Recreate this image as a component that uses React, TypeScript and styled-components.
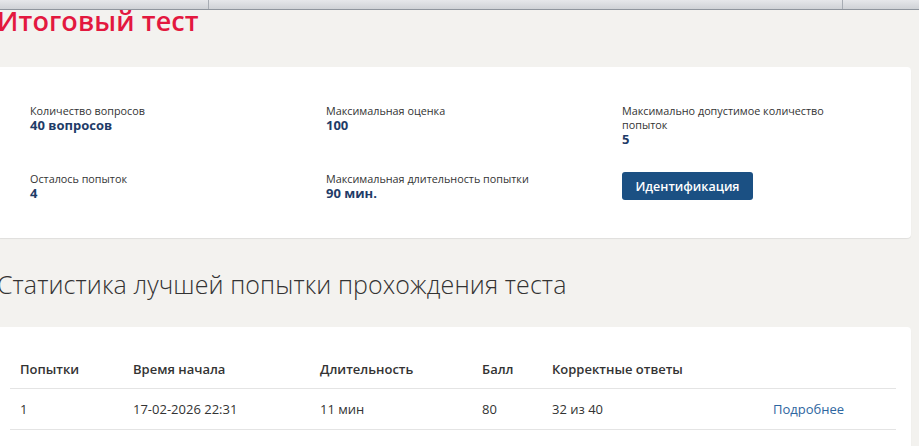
import styled, { createGlobalStyle } from 'styled-components';

const GlobalStyle = createGlobalStyle`
	html, body {
		margin: 0;
		padding: 0;
		background: #f3f2ef;
		overflow: hidden;
	}
	body {
		font-family: "Open Sans", "Noto Sans", sans-serif;
		color: #333;
	}
`;

const TopStrip = styled.div`
	display: flex;
	height: 9px;
	background: linear-gradient(#e6e7ea, #cfd2d6);
	border-bottom: 1px solid #8f959d;
`;

const StripPart = styled.div<{ w?: number }>`
	${props => props.w ? `width: ${props.w}px;` : 'flex: 1;'}
	border-right: 1px solid #a7acb3;
	&:last-child {
		border-right: none;
	}
`;

const Page = styled.div`
	margin-left: -4px;
	width: 915px;
`;

const Title = styled.h1`
	margin: 0 0 35px 4px;
	font-family: "Open Sans", sans-serif;
	font-size: 27px;
	line-height: 22px;
	font-weight: 600;
	color: #e3183f;
	letter-spacing: 0.1px;
	position: relative;
	left: -3px;
`;

const Card = styled.div<{ table?: boolean }>`
	background: #fff;
	border-radius: 4px;
	box-shadow: 0 1px 1px rgba(0, 0, 0, 0.08);
	${props => props.table ? `
		padding: 20px 15px 20px 14px;
	` : `
		padding: 37px 0 38px 34px;
	`}
`;

const InfoGrid = styled.div`
	display: grid;
	grid-template-columns: 296px 296px 215px;
	row-gap: 26px;
`;

const InfoItem = styled.div`
	display: flex;
	flex-direction: column;
	align-items: flex-start;
`;

const Label = styled.div`
	font-size: 10.8px;
	line-height: 14px;
	color: #333;
`;

const Value = styled.div`
	font-size: 13px;
	line-height: 14px;
	font-weight: 700;
	color: #1f3c68;
`;

const Button = styled.button`
	height: 28px;
	width: 131px;
	border: none;
	border-radius: 3px;
	background: #1b5083;
	color: #fff;
	font-family: "Open Sans", sans-serif;
	font-size: 12.5px;
	font-weight: 600;
	cursor: pointer;
`;

const SectionTitle = styled.h2`
	margin: 31px 0 28px 1px;
	font-size: 25px;
	line-height: 30px;
	font-weight: 300;
	letter-spacing: 0.1px;
	color: #333;
`;

const Table = styled.table`
	width: 100%;
	border-collapse: collapse;
	table-layout: fixed;
	font-size: 13px;
	line-height: 18px;
`;

const Th = styled.th`
	text-align: left;
	font-weight: 600;
	color: #333;
	padding: 13px 10px 10px;
	border-bottom: 1px solid #e4e4e4;
`;

const Td = styled.td`
	color: #333;
	padding: 11px 10px 11px;
	border-bottom: 1px solid #e4e4e4;
`;

const Link = styled.a`
	color: #2e66a0;
	text-decoration: none;
`;

const info = [
	{ label: 'Количество вопросов', value: '40 вопросов' },
	{ label: 'Максимальная оценка', value: '100' },
	{ label: 'Максимально допустимое количество попыток', value: '5' },
	{ label: 'Осталось попыток', value: '4' },
	{ label: 'Максимальная длительность попытки', value: '90 мин.' },
];

const columns = [
	{ title: 'Попытки', width: 113 },
	{ title: 'Время начала', width: 187 },
	{ title: 'Длительность', width: 162 },
	{ title: 'Балл', width: 70 },
	{ title: 'Корректные ответы', width: 221 },
	{ title: '', width: 133 },
];

const attempts = [
	{ n: '1', start: '17-02-2026 22:31', duration: '11 мин', score: '80', correct: '32 из 40' },
];

const App = () => {
	return (
		<>
			<GlobalStyle />
			<TopStrip>
				<StripPart w={208} />
				<StripPart w={633} />
				<StripPart />
			</TopStrip>
			<Page>
				<Title>Итоговый тест</Title>
				<Card>
					<InfoGrid>
						{info.map((item, index) => (
							<InfoItem key={index}>
								<Label>{item.label}</Label>
								<Value>{item.value}</Value>
							</InfoItem>
						))}
						<InfoItem>
							<Button>Идентификация</Button>
						</InfoItem>
					</InfoGrid>
				</Card>
				<SectionTitle>Статистика лучшей попытки прохождения теста</SectionTitle>
				<Card table>
					<Table>
						<colgroup>
							{columns.map((col, index) => (
								<col key={index} style={{ width: col.width }} />
							))}
						</colgroup>
						<thead>
							<tr>
								{columns.map((col, index) => (
									<Th key={index}>{col.title}</Th>
								))}
							</tr>
						</thead>
						<tbody>
							{attempts.map((row, index) => (
								<tr key={index}>
									<Td>{row.n}</Td>
									<Td>{row.start}</Td>
									<Td>{row.duration}</Td>
									<Td>{row.score}</Td>
									<Td>{row.correct}</Td>
									<Td><Link href="#">Подробнее</Link></Td>
								</tr>
							))}
						</tbody>
					</Table>
				</Card>
			</Page>
		</>
	);
};

export default App;
